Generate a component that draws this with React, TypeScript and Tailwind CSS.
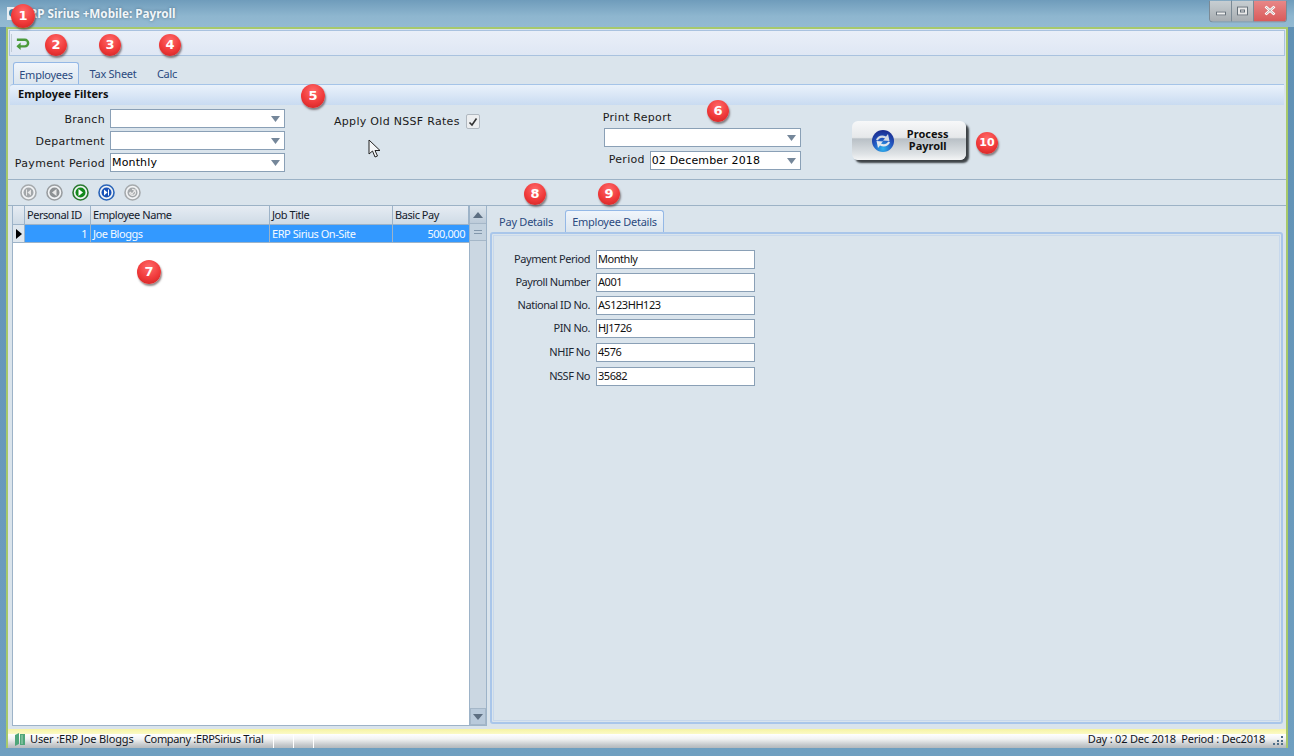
const UI = "font-['Noto_Sans',sans-serif] tracking-[-0.45px]";
const TAB = "font-['Noto_Sans',sans-serif] tracking-[-0.25px]";
const VERD = "font-['DejaVu_Sans',sans-serif] tracking-[0.3px]";
const VALUE = "font-['DejaVu_Sans',sans-serif] tracking-[0.15px]";
const BOLD = "font-['Noto_Sans',sans-serif] font-bold";

function Badge({ n, cx, cy, d = 22 }: { n: string; cx: number; cy: number; d?: number }) {
  return (
    <div
      className="absolute z-20 flex items-center justify-center rounded-full bg-[radial-gradient(circle_at_50%_30%,#ff6a6a_0%,#f03a3a_55%,#c91f1f_100%)] font-['DejaVu_Sans',sans-serif] font-bold text-white shadow-[1px_2px_2px_rgba(60,40,40,0.55)]"
      style={{ left: cx - d / 2, top: cy - d / 2, width: d, height: d, fontSize: n === "10" ? 11 : 13 }}
    >
      {n}
    </div>
  );
}

function Arrow() {
  return (
    <svg width="9" height="6" viewBox="0 0 9 6" className="shrink-0">
      <path d="M0 0H9L4.5 6Z" fill="#75879a" />
    </svg>
  );
}

function Select({ value, className }: { value?: string; className: string }) {
  return (
    <div className={`flex h-[19px] items-center justify-between border border-[#8aa0b6] bg-white pl-[1px] pr-[4px] text-[11px] text-black ${VALUE} ${className}`}>
      <span className="pt-[1px]">{value}</span>
      <Arrow />
    </div>
  );
}

function FilterRow({ label, value }: { label: string; value?: string }) {
  return (
    <div className="flex h-[19px] items-center">
      <span className={`w-[92px] whitespace-nowrap pt-[1px] text-right text-[11px] leading-none text-[#1a1a1a] [direction:rtl] ${VERD}`}>{label}</span>
      <Select value={value} className="ml-[5px] w-[175px]" />
    </div>
  );
}

function NavBtn({ color, ring, kind }: { color: string; ring: string; kind: string }) {
  return (
    <svg width="17" height="17" viewBox="0 0 17 17">
      <circle cx="8.5" cy="8.5" r="7.5" fill="#f2f4f6" stroke={ring} strokeWidth="1.6" />
      <circle cx="8.5" cy="8.5" r="5" fill={color} />
      {kind === "first" && <path d="M11 5.5V11.5L7.5 8.5ZM6 5.5H7V11.5H6Z" fill="#e8e8e8" />}
      {kind === "prev" && <path d="M10.5 5V12L6 8.5Z" fill="#e8e8e8" />}
      {kind === "next" && <path d="M6.5 5V12L11 8.5Z" fill="#fff" />}
      {kind === "last" && <path d="M6 5.5V11.5L9.5 8.5ZM10 5.5H11V11.5H10Z" fill="#fff" />}
      {kind === "ok" && <path d="M5.5 8.5A3 3 0 1 0 8 5.5M6 8L8 10L11.5 5.5" fill="none" stroke="#e8e8e8" strokeWidth="1.2" />}
    </svg>
  );
}

function Field({ label, value }: { label: string; value: string }) {
  return (
    <div className="flex h-[19px] items-center">
      <span className={`w-[93px] whitespace-nowrap pb-[2px] text-right text-[11px] leading-none text-[#1c2733] ${UI}`}>{label}</span>
      <div className={`ml-[6px] flex h-[19px] w-[159px] items-center border border-[#8aa0b6] bg-white pl-[1px] text-[11px] text-[#111] ${UI}`}>{value}</div>
    </div>
  );
}

function HeadCell({ w, children }: { w: string; children?: string }) {
  return (
    <div className={`flex h-full items-center border-r border-[#9db3c8] pl-[2px] pt-[1px] text-[11px] text-[#14202c] ${UI} ${w}`}>{children}</div>
  );
}

export default function App() {
  return (
    <div className="relative flex h-[756px] w-[1294px] flex-col overflow-hidden bg-[linear-gradient(180deg,#5f90b4_0%,#6f9fc0_100%)]">
      {/* title bar */}
      <div className="flex h-[27px] shrink-0 items-center justify-between bg-[linear-gradient(180deg,#6f9cbb_0%,#8eb6cf_60%,#93bad2_100%)] pl-[7px] pr-[7px]">
        <div className="flex items-center">
          <svg width="11" height="13" viewBox="0 0 11 13">
            <rect width="11" height="13" fill="#e8eef2" />
            <circle cx="6" cy="6" r="4" fill="#3f7f9f" />
          </svg>
          <span className={`ml-[5px] whitespace-nowrap pt-[1px] text-[11.7px] text-[#f2f6f9] [text-shadow:0_0_3px_rgba(40,70,90,0.6)] ${BOLD}`}>ERP Sirius +Mobile: Payroll</span>
        </div>
        <div className="flex h-[22px] -translate-y-[2.5px] overflow-hidden rounded-b-[4px] border border-t-0 border-[#7b8a95]">
          <div className="flex w-[22px] items-center justify-center border-r border-[#7b8a95] bg-[linear-gradient(180deg,#c8cfd3,#a8adb1)]">
            <div className="mt-[5px] h-[4px] w-[10px] border border-[#66717a] bg-[#f0f0f0]" />
          </div>
          <div className="flex w-[22px] items-center justify-center border-r border-[#7b8a95] bg-[linear-gradient(180deg,#c8cfd3,#a8adb1)]">
            <div className="flex h-[9px] w-[11px] items-center justify-center border border-[#66717a] bg-[#e8e8e8]">
              <div className="h-[3px] w-[5px] border border-[#66717a]" />
            </div>
          </div>
          <div className="flex w-[32px] items-center justify-center bg-[linear-gradient(180deg,#e88888,#d95a5a)]">
            <svg width="12" height="10" viewBox="0 0 12 10">
              <path d="M1.5 1L10.5 9M10.5 1L1.5 9" stroke="#fff" strokeWidth="2.6" />
              <path d="M2 1.5L10 8.5M10 1.5L2 8.5" stroke="#5d3a3a" strokeWidth="0.4" />
            </svg>
          </div>
        </div>
      </div>

      {/* client frame */}
      <div className="mx-[6px] mb-[8px] mt-0 flex min-h-0 flex-1 flex-col border-[2px] border-b-0 border-[#a7c96b] bg-[#dae4ec]">
        {/* toolbar */}
        <div className="mx-[1px] mt-[1px] flex h-[26px] shrink-0 items-center border border-[#a9c2df] bg-[linear-gradient(180deg,#e9eff8,#dfe7f4)] pl-[1px]">
          <div className="mr-[3px] h-[18px] w-[1px] bg-[#c2ccd6]" />
          <svg width="15" height="14" viewBox="0 0 16 14" className="mt-[2px]">
            <path d="M2 2.5H10.5A3.5 3.5 0 0 1 10.5 9.5H3" fill="none" stroke="#4a9a3a" strokeWidth="2.6" />
            <path d="M6 5.5L1.5 9.5L6 13.5Z" fill="#4a9a3a" />
          </svg>
        </div>

        {/* main tabs */}
        <div className="flex h-[28px] shrink-0 items-end pl-[5px]">
          <div className={`flex h-[22px] w-[66px] items-center justify-center rounded-t-[3px] border border-b-0 border-[#94b8e6] bg-[linear-gradient(180deg,#f0f5fb,#dbe5ee)] pt-[3px] text-[11px] text-[#2b4a80] ${TAB}`}>Employees</div>
          <div className={`flex h-[22px] w-[68px] items-center justify-center pt-[3px] text-[11px] text-[#2b4a80] ${TAB}`}>Tax Sheet</div>
          <div className={`flex h-[22px] w-[40px] items-center justify-center pt-[3px] text-[11px] text-[#2b4a80] ${TAB}`}>Calc</div>
        </div>

        {/* filter group */}
        <div className="mx-[2px] flex h-[21px] shrink-0 items-center rounded-tl-[3px] border-t border-[#a5c4e8] bg-[linear-gradient(180deg,#eaf2fb,#c9dbf1)] pb-[2px] pl-[8px]">
          <span className={`text-[11px] text-[#111] ${BOLD}`}>Employee Filters</span>
        </div>
        <div className="flex h-[75px] shrink-0 border-b border-[#9cb2c6] pl-[5px]">
          <div className="flex flex-col gap-[3px] pt-[4px]">
            <FilterRow label="Branch" />
            <FilterRow label="Department" />
            <FilterRow label="Payment Period" value="Monthly" />
          </div>
          <div className="ml-[49px] flex h-fit items-center pt-[8px]">
            <span className={`whitespace-nowrap pt-[1px] text-[11px] text-[#1a1a1a] ${VERD}`}>Apply Old NSSF Rates</span>
            <div className="ml-[6px] flex h-[15px] w-[14px] items-center justify-center rounded-[2px] border border-[#b0b8c0] bg-[#eceef0]">
              <svg width="10" height="10" viewBox="0 0 10 10"><path d="M1.5 5.5L4 8L8.5 1.5" fill="none" stroke="#333" strokeWidth="1.6" /></svg>
            </div>
          </div>
          <div className="ml-[123px] flex w-[198px] flex-col pt-[4px]">
            <span className={`h-[19px] text-[11px] leading-[17px] text-[#1a1a1a] ${VERD}`}>Print Report</span>
            <Select className="ml-[1px] w-[197px]" />
            <div className="mt-[4px] flex items-center">
              <span className={`ml-[6px] w-[36px] text-[11px] text-[#1a1a1a] ${VERD}`}>Period</span>
              <Select value="02 December 2018" className="ml-[5px] w-[151px]" />
            </div>
          </div>
          <div className="relative ml-[51px] mt-[16px] flex h-[39px] w-[114px] items-center rounded-[6px] bg-[linear-gradient(180deg,#f7f8f9_0%,#e6e8ea_42%,#b9c0c6_46%,#dfe3e6_85%,#f4f5f6_100%)] shadow-[3px_3px_2px_#3d4246]">
            <svg width="24" height="24" viewBox="0 0 24 24" className="ml-[19px]">
              <defs>
                <radialGradient id="g" cx="50%" cy="85%" r="80%">
                  <stop offset="0%" stopColor="#2fb4ee" />
                  <stop offset="55%" stopColor="#2256c0" />
                  <stop offset="100%" stopColor="#1c2f92" />
                </radialGradient>
              </defs>
              <circle cx="12" cy="12" r="11" fill="url(#g)" />
              <path d="M5 11C6 7 11 5 15 7.5L17 5L18.5 12L12 11.5L14 9.5C11 8 8 9 7 11.5Z" fill="#d6dbe4" />
              <path d="M19 13C18 17 13 19 9 16.5L7 19L5.5 12L12 12.5L10 14.5C13 16 16 15 17 12.5Z" fill="#e3e8ee" />
            </svg>
            <span className={`-mt-[2px] ml-[3px] w-[60px] text-center text-[11px] leading-[12px] text-[#111] ${BOLD}`}>Process<br />Payroll</span>
          </div>
        </div>

        {/* nav */}
        <div className="flex h-[26px] shrink-0 items-center gap-[9px] border-b border-[#9cb2c6] pl-[12px]">
          <NavBtn color="#a3a7aa" ring="#a6aaad" kind="first" />
          <NavBtn color="#8d9194" ring="#9a9ea1" kind="prev" />
          <NavBtn color="#12891a" ring="#2b7a30" kind="next" />
          <NavBtn color="#1751b8" ring="#2a64b8" kind="last" />
          <NavBtn color="#a3a7aa" ring="#a6aaad" kind="ok" />
        </div>

        {/* body */}
        <div className="flex min-h-0 flex-1 pl-[4px] pr-[1px]">
          {/* grid */}
          <div className="flex h-[520px] w-[475px] border border-t-0 border-[#9db3c8] bg-white">
            <div className="flex min-w-0 flex-1 flex-col">
              <div className="flex h-[19px] shrink-0 border-b border-[#9db3c8] bg-[linear-gradient(180deg,#e6ecf3,#cfdbe6)]">
                <HeadCell w="w-[12px]" />
                <HeadCell w="w-[66px]">Personal ID</HeadCell>
                <HeadCell w="w-[179px]">Employee Name</HeadCell>
                <HeadCell w="w-[123px]">Job Title</HeadCell>
                <HeadCell w="flex-1">Basic Pay</HeadCell>
              </div>
              <div className={`flex h-[18px] shrink-0 border-b border-[#9db3c8] bg-[#3399ff] pt-0 text-[11px] text-[#f4f9ff] ${UI}`}>
                <div className="flex w-[12px] items-center justify-center border-r border-[#9db3c8] bg-[#dfe7ee]">
                  <svg width="6" height="10" viewBox="0 0 6 10"><path d="M0 0L6 5L0 10Z" fill="#000" /></svg>
                </div>
                <div className="flex w-[66px] items-center justify-end border-r border-[#9db3c8] pr-[3px] pt-[1px]">1</div>
                <div className="flex w-[179px] items-center border-r border-[#9db3c8] pl-[2px] pt-[1px]">Joe Bloggs</div>
                <div className="flex w-[123px] items-center border-r border-[#9db3c8] pl-[2px] pt-[1px]">ERP Sirius On-Site</div>
                <div className="flex flex-1 items-center justify-end pr-[4px] pt-[1px]">500,000</div>
              </div>
            </div>
            <div className="flex w-[17px] shrink-0 flex-col border-l border-[#9db3c8] bg-[#cbd7e2]">
              <div className="flex h-[18px] shrink-0 items-center justify-center border-b border-[#a5b7c8] bg-[linear-gradient(180deg,#dbe4ec,#bccbd9)]">
                <svg width="10" height="6" viewBox="0 0 10 6"><path d="M0 6H10L5 0Z" fill="#5d6f82" /></svg>
              </div>
              <div className="flex h-[17px] shrink-0 flex-col items-center justify-center gap-[2px] border-b border-[#a5b7c8] bg-[#c3d2df]">
                <div className="h-[1px] w-[8px] bg-[#8297ab]" />
                <div className="h-[1px] w-[8px] bg-[#8297ab]" />
              </div>
              <div className="flex-1" />
              <div className="flex h-[17px] shrink-0 items-center justify-center border border-[#a5b7c8] bg-[#b9cadb]">
                <svg width="10" height="6" viewBox="0 0 10 6"><path d="M0 0H10L5 6Z" fill="#5d6f82" /></svg>
              </div>
            </div>
          </div>

          {/* right panel */}
          <div className="ml-[3px] flex min-w-0 flex-1 flex-col">
            <div className="flex h-[26px] shrink-0 items-end">
              <div className={`flex h-[22px] w-[75px] items-center justify-center pr-[3px] pt-[2px] text-[11px] text-[#2b4a80] ${TAB}`}>Pay Details</div>
              <div className={`flex h-[22px] w-[99px] items-center justify-center rounded-t-[3px] border border-b-0 border-[#94b8e6] bg-[linear-gradient(180deg,#f0f5fb,#dbe5ee)] pt-[2px] text-[11px] text-[#2b4a80] ${TAB}`}>Employee Details</div>
            </div>
            <div className="mb-[5px] mr-[2px] h-[492px] rounded-[3px] border-[2px] border-[#a9c6ea] pl-[5px] pt-[16px] outline outline-1 -outline-offset-[4px] outline-[#c7d8ec]">
              <div className="flex flex-col gap-[4px]">
                <Field label="Payment Period" value="Monthly" />
                <Field label="Payroll Number" value="A001" />
                <Field label="National ID No." value="AS123HH123" />
                <div className="flex flex-col gap-[5px]">
                  <Field label="PIN No." value="HJ1726" />
                  <Field label="NHIF No" value="4576" />
                  <Field label="NSSF No" value="35682" />
                </div>
              </div>
            </div>
          </div>
        </div>

        {/* status bar */}
        <div className="flex h-[19px] shrink-0 flex-col">
          <div className="h-[5px] shrink-0 bg-[linear-gradient(180deg,#f6f3a5,#fbfac5)]" />
          <div className={`flex flex-1 items-start bg-[linear-gradient(180deg,#ffffff_0%,#f2f3f3_35%,#c3c7ca_80%,#b4b9bd_100%)] pl-[7px] pr-[2px] text-[11px] leading-[10px] text-[#10151c] ${UI}`}>
            <svg width="10" height="13" viewBox="0 0 10 13" className="-mt-[1px] shrink-0">
              <path d="M0 2L4 0V11L0 13ZM5 1H10V12H5Z" fill="#4fa67a" />
              <path d="M7 2V11" stroke="#a6d3b8" />
            </svg>
            <span className="ml-[5px] w-[114px] whitespace-nowrap tracking-[-0.15px]">User :ERP Joe Bloggs</span>
            <span className="w-[129px] whitespace-nowrap tracking-[-0.35px]">Company :ERPSirius Trial</span>
            <div className="h-full w-[1px] bg-white" />
            <div className="ml-[19px] h-full w-[1px] bg-white" />
            <div className="ml-[19px] h-full w-[1px] bg-white" />
            <span className="ml-auto whitespace-nowrap tracking-[-0.2px]">Day : 02 Dec 2018&nbsp;&nbsp;Period : Dec2018</span>
            <svg width="12" height="10" viewBox="0 0 12 10" className="ml-[7px] mt-[1px] shrink-0">
              <path d="M9 1h2v2H9zM5 5h2v2H5zM9 5h2v2H9zM1 8h2v2H1zM5 8h2v2H5zM9 8h2v2H9z" fill="#4f6e88" />
            </svg>
          </div>
        </div>
      </div>

      {/* cursor */}
      <svg width="14" height="20" viewBox="0 0 14 20" className="absolute left-[368px] top-[139px] z-10">
        <path d="M1 1V15L4.5 12L7 18L9.5 17L7 11.5H12Z" fill="#f4f6f8" stroke="#222" strokeWidth="1" />
      </svg>

      <Badge n="1" cx={23} cy={16} d={24} />
      <Badge n="2" cx={56} cy={45} />
      <Badge n="3" cx={110} cy={45} />
      <Badge n="4" cx={170} cy={45} />
      <Badge n="5" cx={313} cy={96} d={24} />
      <Badge n="6" cx={718} cy={111} />
      <Badge n="7" cx={149} cy={272} d={24} />
      <Badge n="8" cx={535} cy={194} />
      <Badge n="9" cx={609} cy={194} />
      <Badge n="10" cx={987} cy={143} />
    </div>
  );
}
